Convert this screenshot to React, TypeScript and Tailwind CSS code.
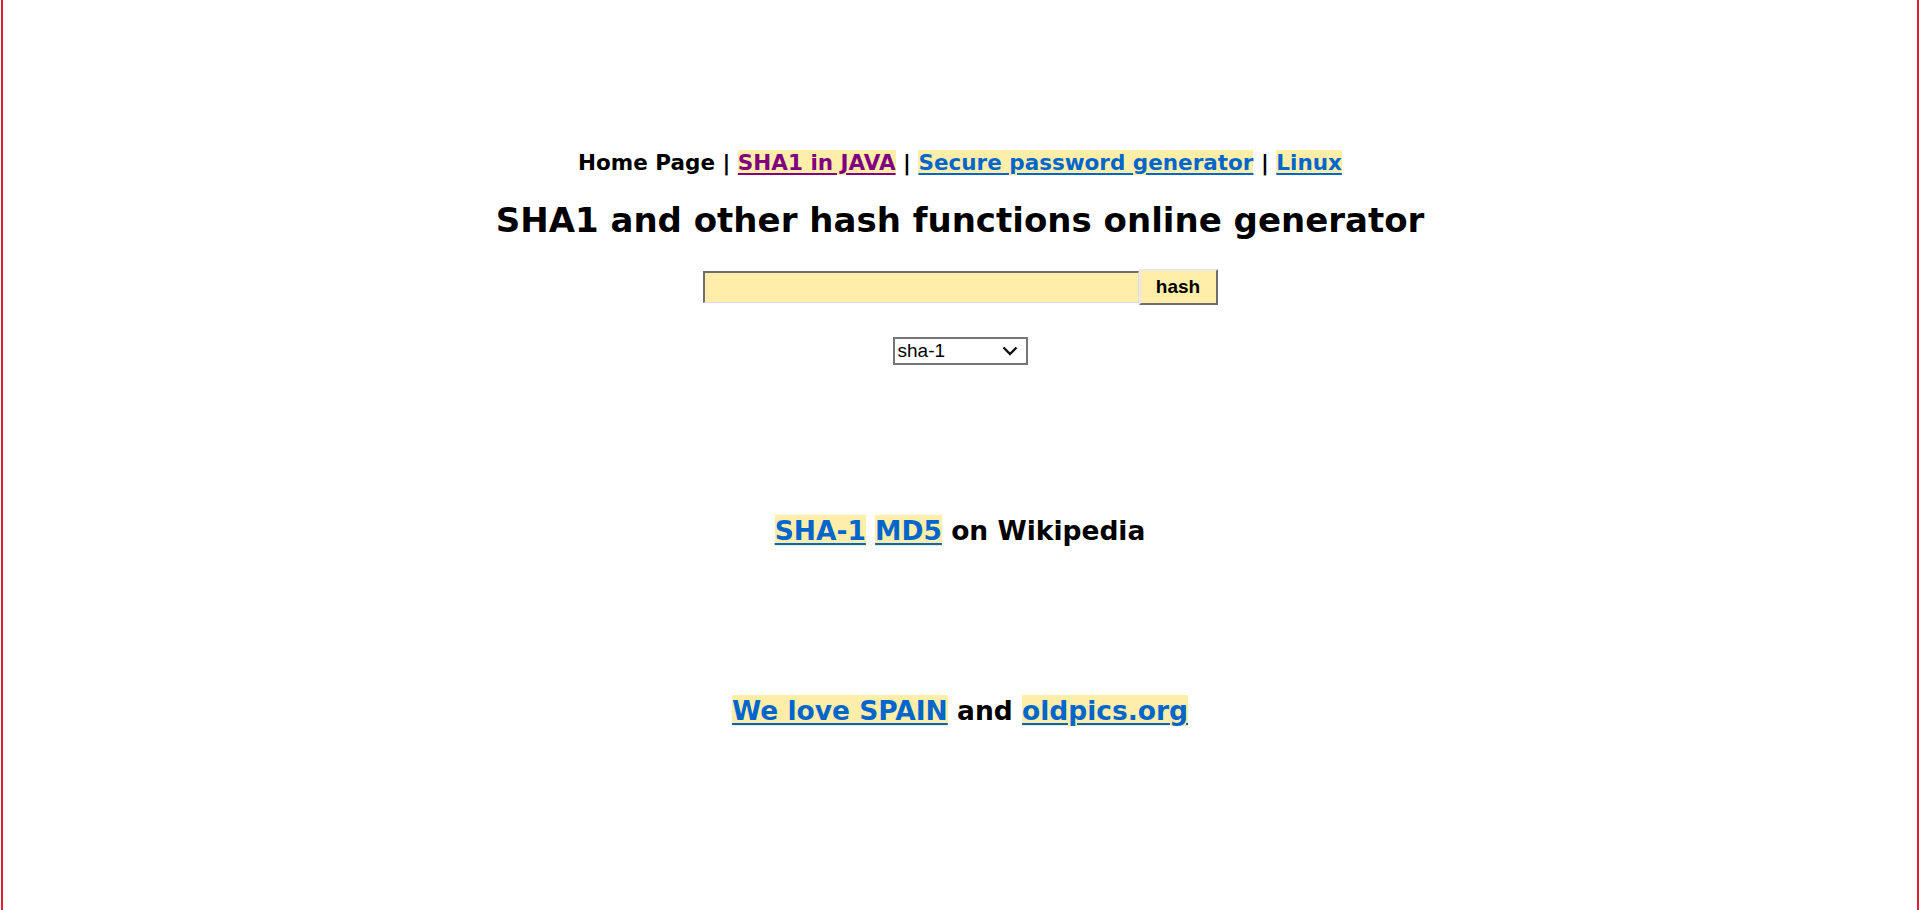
import React from "react";

const linkCls =
  "bg-[#ffeeaa] underline decoration-2 underline-offset-[3px]";

export default function App() {
  return (
    <div className="min-h-[910px] bg-white px-px">
      <div
        className="min-h-[910px] border-x-2 border-[#e0202e] flex flex-col items-center text-black"
        style={{ fontFamily: '"DejaVu Sans", Verdana, sans-serif' }}
      >
        {/* top nav */}
        <div className="mt-[149px] text-[21.5px] font-bold leading-[28px]">
          <span>Home Page</span> |{" "}
          <a className={`${linkCls} text-[#800080]`} href="#">
            SHA1 in JAVA
          </a>{" "}
          |{" "}
          <a className={`${linkCls} text-[#0066cc]`} href="#">
            Secure password generator
          </a>{" "}
          |{" "}
          <a className={`${linkCls} text-[#0066cc]`} href="#">
            Linux
          </a>
        </div>

        <h1 className="mt-[22px] text-[34px] font-bold leading-[42px]">
          SHA1 and other hash functions online generator
        </h1>

        {/* form */}
        <div className="mt-[28px] flex items-center">
          <input
            className="w-[436px] h-[32px] bg-[#ffeeaa] border-t-2 border-l-2 border-b border-r border-t-[#6e6e6e] border-l-[#6e6e6e] border-b-[#dcdcdc] border-r-[#dcdcdc] outline-none"
            type="text"
          />
          <button
            className="w-[79px] h-[36px] bg-[#ffeeaa] border-2 border-t-[#e8e8e8] border-l-[#e8e8e8] border-b-[#6e6e6e] border-r-[#6e6e6e] text-[19px] font-bold"
            style={{ fontFamily: '"Liberation Sans", Arial, sans-serif' }}
          >
            hash
          </button>
        </div>

        <div className="mt-[32px]">
          <div
            className="w-[135px] h-[28px] border-2 border-[#767676] bg-white flex items-center justify-between pl-[3px] pr-[8px] text-[19px]"
            style={{ fontFamily: '"Liberation Sans", Arial, sans-serif' }}
          >
            <span>sha-1</span>
            <svg width="16" height="10" viewBox="0 0 16 10">
              <path
                d="M1.5 1.5 L8 8 L14.5 1.5"
                fill="none"
                stroke="#111"
                strokeWidth="2.4"
              />
            </svg>
          </div>
        </div>

        <div className="mt-[149px] text-[26.5px] font-bold leading-[34px]">
          <a className={`${linkCls} text-[#0066cc]`} href="#">
            SHA-1
          </a>{" "}
          <a className={`${linkCls} text-[#0066cc]`} href="#">
            MD5
          </a>{" "}
          on Wikipedia
        </div>

        <div className="mt-[146px] text-[26.5px] font-bold leading-[34px]">
          <a className={`${linkCls} text-[#0066cc]`} href="#">
            We love SPAIN
          </a>{" "}
          and{" "}
          <a className={`${linkCls} text-[#0066cc]`} href="#">
            oldpics.org
          </a>
        </div>
      </div>
    </div>
  );
}
